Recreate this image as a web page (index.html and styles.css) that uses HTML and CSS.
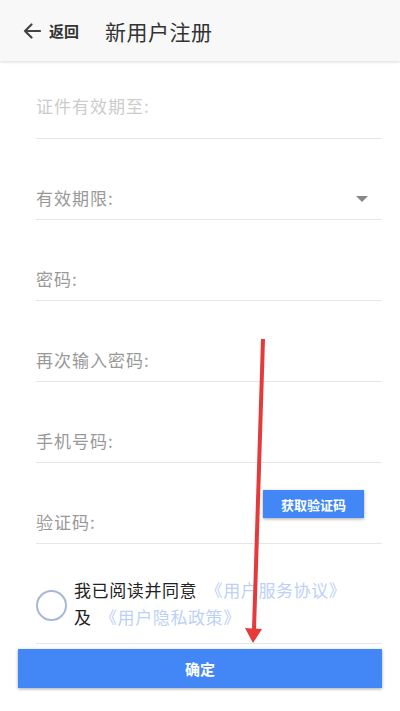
FILE: index.html
```html
<!doctype html>
<html lang="zh-CN">
  <head>
    <meta charset="UTF-8" />
    <meta name="viewport" content="width=device-width, initial-scale=1.0" />
    <title>新用户注册</title>
    <link rel="stylesheet" href="styles.css">
  </head>
  <body>
    <div class="header">
      <div class="back">
        <svg class="back-icon" width="18" height="16" viewBox="0 0 18 16">
          <path d="M17 8H2M8.5 1.5L2 8l6.5 6.5" fill="none" stroke="#444" stroke-width="2.2" stroke-linecap="round" stroke-linejoin="round"/>
        </svg>
        <span>返回</span>
      </div>
      <div class="title">新用户注册</div>
    </div>

    <div class="form">
      <div class="field first">
        <span class="label placeholder">证件有效期至:</span>
      </div>
      <div class="field">
        <span class="label">有效期限:</span>
        <span class="caret"></span>
      </div>
      <div class="field">
        <span class="label">密码:</span>
      </div>
      <div class="field">
        <span class="label">再次输入密码:</span>
      </div>
      <div class="field">
        <span class="label">手机号码:</span>
      </div>
      <div class="field code">
        <span class="label">验证码:</span>
        <button class="code-btn">获取验证码</button>
      </div>
      <div class="agree">
        <span class="radio"></span>
        <div class="agree-text">
          <div>我已阅读并同意 <a class="link">《用户服务协议》</a></div>
          <div>及 <a class="link">《用户隐私政策》</a></div>
        </div>
      </div>
      <button class="submit">确定</button>
    </div>

    <svg class="annotation" width="400" height="711" viewBox="0 0 400 711">
      <line x1="263" y1="339" x2="254" y2="630" stroke="#e53a3a" stroke-width="4"/>
      <polygon points="245,628 262,629 253,643" fill="#e53a3a"/>
    </svg>
  </body>
</html>
```

FILE: styles.css
```css
body {
  margin: 0;
  width: 400px;
  height: 711px;
  overflow: hidden;
  position: relative;
  background: #fff;
  font-family: "Noto Sans CJK SC", "Noto Sans", sans-serif;
}
.header {
  height: 61px;
  background: #f8f8f8;
  display: flex;
  align-items: center;
  box-shadow: 0 1px 3px rgba(0, 0, 0, 0.15);
  position: relative;
  z-index: 1;
}
.back {
  display: flex;
  align-items: center;
  margin-left: 23px;
  gap: 8px;
  font-size: 15px;
  font-weight: bold;
  color: #333;
}
.back-icon {
  display: block;
}
.title {
  margin-left: 26px;
  font-size: 21px;
  letter-spacing: 0.5px;
  color: #333;
}
.form {
  padding: 0 18px;
}
.field {
  margin-left: 18px;
  height: 80px;
  border-bottom: 1px solid #e6e6e6;
  display: flex;
  align-items: flex-end;
  justify-content: space-between;
  position: relative;
}
.field.first {
  height: 77px;
}
.label {
  font-size: 17px;
  letter-spacing: 1px;
  color: #999;
  padding-bottom: 9px;
  line-height: 24px;
}
.placeholder {
  color: #ccc;
}
.field.first .label {
  padding-bottom: 20px;
}
.caret {
  width: 0;
  height: 0;
  border-left: 6px solid transparent;
  border-right: 6px solid transparent;
  border-top: 6px solid #888;
  margin-right: 14px;
  margin-bottom: 17px;
}
.code-btn {
  position: absolute;
  right: 18px;
  top: 27px;
  width: 101px;
  height: 28px;
  border: none;
  background: #4287f5;
  color: #fff;
  font-family: inherit;
  font-size: 13px;
  font-weight: bold;
  box-shadow: 0 1px 3px rgba(0, 0, 0, 0.35);
  padding: 0;
}
.agree {
  height: 99px;
  border-bottom: 1px solid #e6e6e6;
  margin-left: 18px;
  display: flex;
  align-items: center;
  position: relative;
}
.radio {
  position: absolute;
  left: 0;
  top: 46px;
  width: 27px;
  height: 27px;
  border: 2.5px solid #a9b7d6;
  border-radius: 50%;
}
.agree-text {
  margin-left: 38px;
  margin-top: 18px;
  font-size: 17px;
  letter-spacing: 0.6px;
  line-height: 27px;
  color: #222;
}
.link {
  margin-left: 4px;
  color: #bcd1f5;
}
.submit {
  display: block;
  width: 364px;
  height: 39px;
  margin-top: 5px;
  border: none;
  background: #4287f5;
  color: #fff;
  font-family: inherit;
  font-size: 15px;
  font-weight: bold;
  box-shadow: 0 1px 3px rgba(0, 0, 0, 0.35);
}
.annotation {
  position: absolute;
  left: 0;
  top: 0;
  pointer-events: none;
}
```
